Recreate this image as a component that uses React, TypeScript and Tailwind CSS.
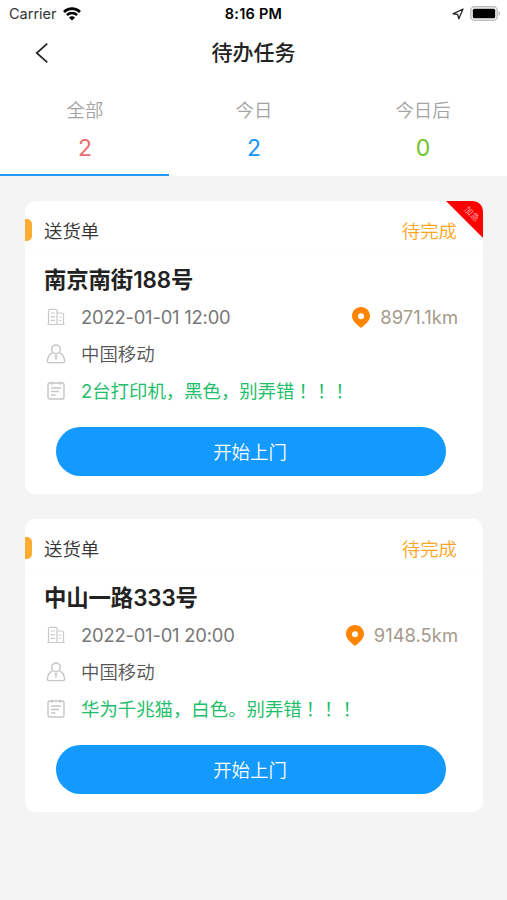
import React from "react";

interface Task {
  id: number;
  type: string;
  status: string;
  address: string;
  time: string;
  distance: string;
  customer: string;
  remark: string;
  urgent?: boolean;
}

interface TabItem {
  label: string;
  count: number;
  countClass: string;
}

const tabs: TabItem[] = [
  { label: "全部", count: 2, countClass: "text-[#ee6b6f]" },
  { label: "今日", count: 2, countClass: "text-[#1296fb]" },
  { label: "今日后", count: 0, countClass: "text-[#6dc51f]" },
];

const tasks: Task[] = [
  {
    id: 1,
    type: "送货单",
    status: "待完成",
    address: "南京南街188号",
    time: "2022-01-01 12:00",
    distance: "8971.1km",
    customer: "中国移动",
    remark: "2台打印机，黑色，别弄错",
    urgent: true,
  },
  {
    id: 2,
    type: "送货单",
    status: "待完成",
    address: "中山一路333号",
    time: "2022-01-01 20:00",
    distance: "9148.5km",
    customer: "中国移动",
    remark: "华为千兆猫，白色。别弄错",
  },
];

const WifiIcon = () => (
  <svg width="18" height="14" viewBox="0 0 18 14" fill="none">
    <path d="M1 4.9C5.5.6 12.5.6 17 4.9" stroke="#000" strokeWidth="2.7" />
    <path d="M3.9 8C6.8 5.3 11.2 5.3 14.1 8" stroke="#000" strokeWidth="2.4" />
    <path d="M9 13.5L5.9 10.4C7.6 8.9 10.4 8.9 12.1 10.4Z" fill="#000" />
  </svg>
);

const LocationIcon = () => (
  <svg width="12" height="12" viewBox="0 0 12 12" fill="none">
    <path d="M11 1L1 5.8L5.6 6.4L6.8 10.8Z" stroke="#222" strokeWidth="1.3" strokeLinejoin="round" />
  </svg>
);

const BatteryIcon = () => (
  <svg width="31" height="15" viewBox="0 0 31 15" fill="none">
    <rect x=".8" y=".8" width="26.4" height="13.4" rx="3.8" fill="#fff" stroke="#bdbdbd" strokeWidth="1.5" />
    <rect x="2.8" y="2.8" width="22.4" height="9.4" rx="1.5" fill="#000" />
    <path d="M28.6 5.3C30.5 6 30.5 9 28.6 9.7Z" fill="#b5b5b5" />
  </svg>
);

const BuildingIcon = () => (
  <svg width="18" height="18" viewBox="0 0 18 18" fill="none" stroke="#c9c9c9" strokeWidth="1.2">
    <path d="M.2 16.5H17.8M1.5 16.5V2.5Q1.5 1.3 2.7 1.3H8.8Q10 1.3 10 2.5V16.5M10 5H15.3Q16.5 5 16.5 6.2V16.5" />
    <path d="M3.7 5H7.8M3.7 8.7H7.8M3.7 12.4H7.8M12.2 9H14.4M12.2 12.5H14.4" />
  </svg>
);

const PersonIcon = () => (
  <svg width="20" height="20" viewBox="0 0 20 20" fill="none" stroke="#c5c5c5" strokeWidth="1.4">
    <circle cx="10" cy="5.3" r="4.3" />
    <path d="M6.5 8.6C3.5 10.3 1.5 13.2 1.4 17.2Q1.4 18.6 2.8 18.6H17.2Q18.6 18.6 18.6 17.2C18.5 13.2 16.5 10.3 13.5 8.6" />
    <path d="M8.7 11.5H11.3M10 11.5V15.8" />
  </svg>
);

const NoteIcon = () => (
  <svg width="18" height="19" viewBox="0 0 18 19" fill="none" stroke="#c5c5c5" strokeWidth="1.4">
    <rect x="1" y="2" width="16" height="16" rx="1.8" />
    <path d="M4.8.4V3.7M13.2.4V3.7M4 7H14M4 10.5H12M4 14H8.5" />
  </svg>
);

const PinIcon = () => (
  <svg width="18" height="21" viewBox="0 0 18 21">
    <path
      fillRule="evenodd"
      d="M9 0C4 0 0 3.9 0 8.9C0 13.4 3.8 16.3 8 20.3Q9 21.2 10 20.3C14.2 16.3 18 13.4 18 8.9C18 3.9 14 0 9 0ZM9 6.3A3 3 0 1 1 9 12.3A3 3 0 1 1 9 6.3Z"
      fill="#ff8500"
    />
  </svg>
);

const StatusBar = () => (
  <div className="relative flex h-[27px] items-center justify-between pl-[9px] pr-[6px]">
    <div className="flex items-center gap-[6px]">
      <span className="text-[14.5px] leading-[27px] text-[#333]">Carrier</span>
      <WifiIcon />
    </div>
    <span className="absolute inset-x-0 text-center text-[14.5px] font-semibold leading-[27px] tracking-[0.25px] text-black">
      8:16 PM
    </span>
    <div className="flex items-center gap-[6px]">
      <LocationIcon />
      <BatteryIcon />
    </div>
  </div>
);

const TaskCard: React.FC<{ task: Task }> = ({ task }) => (
  <div className="relative h-[293px] overflow-hidden rounded-[10px] bg-white">
    {/* Urgent ribbon */}
    {task.urgent && (
      <div className="absolute right-0 top-0 h-[37px] w-[37px] bg-[#fe0000] [clip-path:polygon(0_0,100%_0,100%_100%)]">
        <span className="absolute left-[15px] top-[6px] w-[22px] rotate-45 text-center text-[8.5px] font-[350] leading-[14px] text-[#ffb0b0]">
          加急
        </span>
      </div>
    )}

    {/* Type + status */}
    <div className="flex h-[52px] items-center justify-between border-b border-[#fcfcfc] pr-[26px] pt-[7px]">
      <div className="flex items-center">
        <span className="h-[22px] w-[6.5px] rounded-r-[5px] bg-[#ffac33]" />
        <span className="ml-[12.5px] mt-[2px] text-[18.4px] font-[350] text-[#333]">{task.type}</span>
      </div>
      <span className="mt-[2px] text-[18.4px] font-[350] text-[#fba526]">{task.status}</span>
    </div>

    <div className="pl-[19px] pr-[25px]">
      <h2 className="mt-2 h-[37px] text-[22.4px] font-semibold leading-[37px] tracking-[-0.1px] text-[#222]">
        {task.address}
      </h2>

      <div className="flex h-[37px] items-center pt-px">
        <span className="flex w-[37px] pl-[3px]"><BuildingIcon /></span>
        <span className="flex-1 pt-px text-[18.4px] tracking-[-0.2px] text-[#777]">{task.time}</span>
        <PinIcon />
        <span className="ml-[10px] pt-px text-[18.4px] text-[#a59a8c]">{task.distance}</span>
      </div>

      <div className="flex h-[37px] items-center">
        <span className="flex w-[37px] pl-[2px]"><PersonIcon /></span>
        <span className="pt-[2px] text-[18.4px] font-[350] text-[#555]">{task.customer}</span>
      </div>

      <div className="flex h-[37px] items-center">
        <span className="flex w-[37px] pl-[3px]"><NoteIcon /></span>
        <span className="pt-[2px] text-[18.4px] text-[#1fbe6b]">
          {task.remark}
          <span className="ml-[4px]">！！！</span>
        </span>
      </div>
    </div>

    <button className="ml-[31px] mt-[18px] block h-[49px] w-[390px] rounded-full bg-[#1499ff] pr-[2px] pt-px text-[18.4px] font-[350] text-white">
      开始上门
    </button>
  </div>
);

const App: React.FC = () => (
  <div className="min-h-screen bg-[#f4f4f4] font-[Inter,'Noto_Sans_CJK_SC',sans-serif] leading-[27px]">
    <header className="bg-white">
      <StatusBar />

      <div className="relative flex h-[51px] items-center justify-center">
        <button className="absolute left-[35px] flex" aria-label="返回">
          <svg width="14" height="20" viewBox="0 0 14 20" fill="none">
            <path d="M12.3.7L1.7 10L12.3 19.3" stroke="#222" strokeWidth="1.7" />
          </svg>
        </button>
        <h1 className="text-[21px] font-medium text-[#222]">待办任务</h1>
      </div>

      <nav className="grid h-[98px] grid-cols-3">
        {tabs.map((tab, index) => (
          <button
            key={tab.label}
            className={`flex flex-col items-center pl-px pt-[19px] ${index === 0 ? "border-b-2 border-[#2299f5]" : ""}`}
          >
            <span className="text-[18.4px] font-[350] text-[#a3a3a3]">{tab.label}</span>
            <span className={`mt-[11px] text-[23px] ${tab.countClass}`}>{tab.count}</span>
          </button>
        ))}
      </nav>
    </header>

    <main className="flex flex-col gap-[25px] pl-[25px] pr-6 pt-[25px]">
      {tasks.map((task) => (
        <TaskCard key={task.id} task={task} />
      ))}
    </main>
  </div>
);

export default App;
